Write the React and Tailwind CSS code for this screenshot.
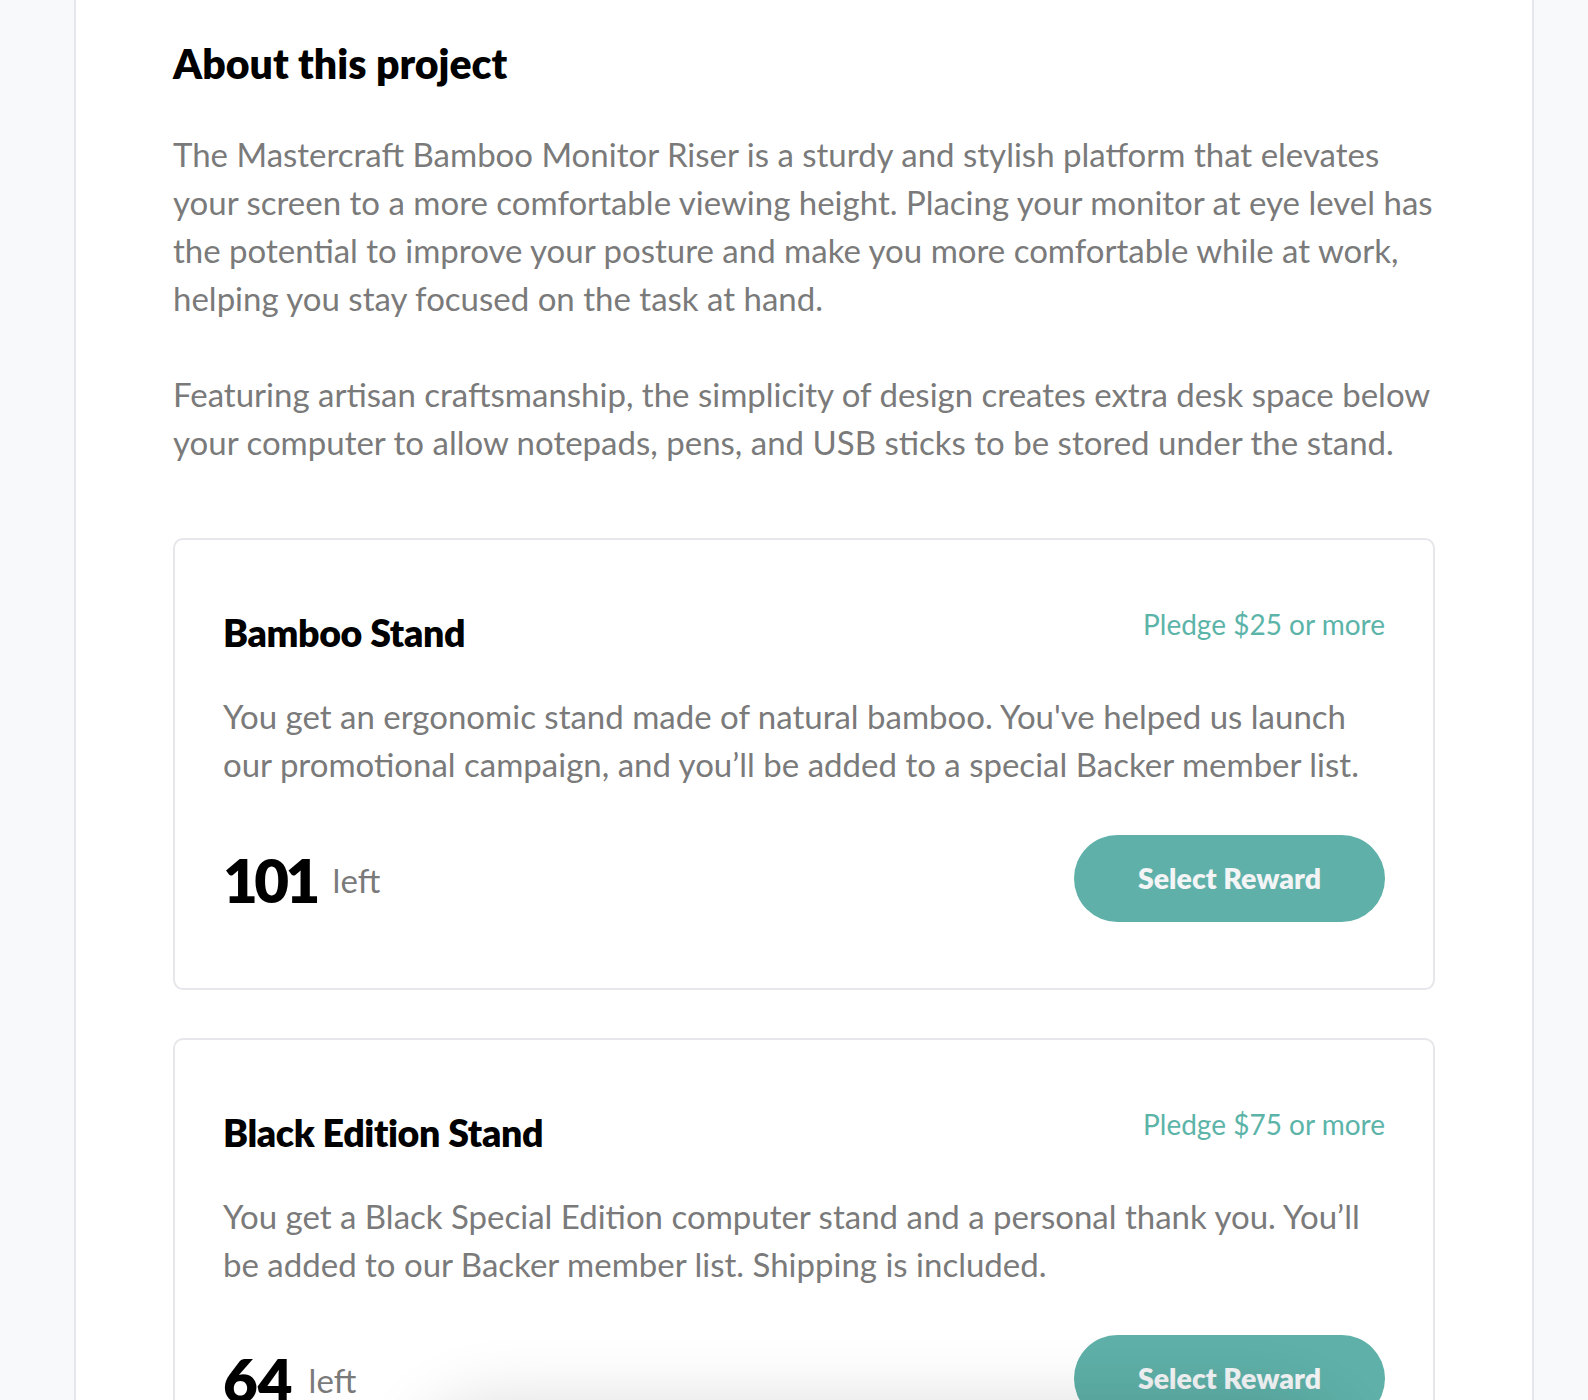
import React from "react";

const rewards = [
  {
    title: "Bamboo Stand",
    pledge: "Pledge $25 or more",
    desc: "You get an ergonomic stand made of natural bamboo. You've helped us launch our promotional campaign, and you’ll be added to a special Backer member list.",
    left: "101",
    tight: true,
  },
  {
    title: "Black Edition Stand",
    pledge: "Pledge $75 or more",
    desc: "You get a Black Special Edition computer stand and a personal thank you. You’ll be added to our Backer member list. Shipping is included.",
    left: "64",
    tight: false,
  },
];

function RewardCard({ r }) {
  return (
    <div className="rounded-[10px] border-2 border-[#e6e6eb] bg-white px-[48px] pt-[64px] pb-[66px]">
      <div className="flex items-start justify-between">
        <h3 className="text-[37.5px] leading-[58px] font-extrabold text-black tracking-[-0.01em]">{r.title}</h3>
        <span className="text-[28px] leading-[41px] text-[#5cb4a9]">{r.pledge}</span>
      </div>
      <p className="mt-[30px] pr-[20px] text-[33px] leading-[48px] text-[#7a7a7a]">{r.desc}</p>
      <div className="mt-[47px] flex items-center justify-between">
        <div className="flex items-center pt-[3px]">
          <span
            className={
              r.tight
                ? "text-[60px] leading-[72px] font-extrabold text-black tracking-[-0.06em]"
                : "text-[60px] leading-[72px] font-extrabold text-black tracking-normal"
            }
          >
            {r.left}
          </span>
          <span className="ml-[16px] text-[33px] leading-[48px] text-[#7a7a7a]">left</span>
        </div>
        <button className="flex h-[87px] w-[311px] items-center justify-center rounded-full bg-[#5eb0a8] text-[28.5px] font-extrabold text-[#f3f4f5]">
          Select Reward
        </button>
      </div>
    </div>
  );
}

export default function App() {
  return (
    <div className="relative h-[1400px] overflow-hidden bg-[#f8f9fb] font-['Lato','Noto_Sans',sans-serif]">
      <div className="ml-[74px] w-[1460px] min-h-[1400px] border-x-2 border-[#e6e7ec] bg-white px-[97px] pt-[40px]">
        <h2 className="text-[41px] leading-[48px] font-extrabold text-black">About this project</h2>
        <p className="mt-[42px] text-[33px] leading-[48px] text-[#7a7a7a]">
          The Mastercraft Bamboo Monitor Riser is a sturdy and stylish platform that elevates your screen to a more comfortable viewing height. Placing your monitor at eye level has the potential to improve your posture and make you more comfortable while at work, helping you stay focused on the task at hand.
        </p>
        <p className="mt-[48px] text-[33px] leading-[48px] text-[#7a7a7a]">
          Featuring artisan craftsmanship, the simplicity of design creates extra desk space below your computer to allow notepads, pens, and USB sticks to be stored under the stand.
        </p>
        <div className="mt-[72px] flex flex-col gap-[48px]">
          {rewards.map((r) => (
            <RewardCard key={r.title} r={r} />
          ))}
        </div>
      </div>
      <div className="pointer-events-none absolute left-[430px] top-[1415px] h-[200px] w-[900px] rounded-[60px] bg-white shadow-[0_0_70px_12px_rgba(0,0,0,0.14)]" />
    </div>
  );
}
